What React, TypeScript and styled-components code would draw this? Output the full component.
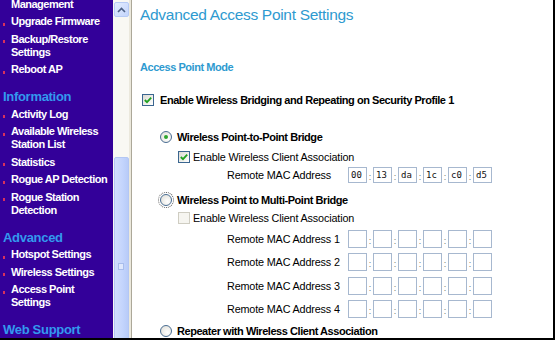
import styled, { createGlobalStyle, css } from "styled-components";

const GlobalStyle = createGlobalStyle`
  html, body {
    margin: 0;
    padding: 0;
    background: #fff;
  }
  body {
    font-family: "Liberation Sans", Arial, sans-serif;
  }
`;

const Page = styled.div`
  display: flex;
  width: 555px;
  height: 340px;
  box-sizing: border-box;
  border-right: 2px solid #000;
  border-bottom: 2px solid #000;
  overflow: hidden;
  font-family: "Liberation Sans", Arial, sans-serif;
`;

/* left menu frame */
const Sidebar = styled.nav`
  width: 113px;
  flex: none;
  background: #330099;
  overflow: hidden;
`;

// scrolled down a bit, like the real frame
const MenuList = styled.div`
  display: flex;
  flex-direction: column;
  margin-top: -20px;
`;

const MenuHeader = styled.div`
  padding: 14px 0 0 3px;
  font-size: 13px;
  line-height: 13px;
  font-weight: bold;
  letter-spacing: -0.3px;
  color: #3399ee;
`;

const MenuItem = styled.a`
  position: relative;
  display: block;
  padding: 4.5px 0 0 11px;
  font-size: 11px;
  line-height: 13px;
  font-weight: bold;
  letter-spacing: -0.5px;
  color: #fff;
  text-decoration: none;

  &::before {
    content: "";
    position: absolute;
    left: 3px;
    top: 12px;
    width: 2px;
    height: 3px;
    background: #d8315c;
  }
`;

const ScrollBar = styled.div`
  width: 18px;
  flex: none;
  box-sizing: border-box;
  border-right: 2px solid #ebe8dc;
  background: #f9f8f3;
  display: flex;
  flex-direction: column;
  align-items: center;
  padding-top: 2px;
  overflow: hidden;
`;

const ScrollButton = styled.div`
  width: 15px;
  height: 15px;
  flex: none;
  box-sizing: border-box;
  border: 1px solid #b7cbf5;
  border-radius: 2px;
  background: linear-gradient(135deg, #e3ecfe, #c4d5fc);
  display: flex;
  align-items: center;
  justify-content: center;
`;

const ScrollThumb = styled.div`
  width: 15px;
  height: 220px;
  flex: none;
  margin-top: 140px;
  box-sizing: border-box;
  border: 1px solid #b3c7f4;
  border-radius: 2px;
  background: linear-gradient(90deg, #d2defd, #c3d4fc 60%, #b8cbf8);
  display: flex;
  justify-content: center;
`;

const ScrollGrip = styled.div`
  width: 6px;
  height: 7px;
  margin-top: 105px;
  box-sizing: border-box;
  border: 1px solid #a8bdec;
  background: #dfe8fd;
`;

/* main frame */
const Content = styled.main`
  flex: 1;
  min-width: 0;
  border-left: 1px solid #aca899;
  padding: 6px 0 0 8px;
  display: flex;
  flex-direction: column;
  overflow: hidden;
  color: #000;
`;

const Title = styled.h1`
  margin: 0;
  font-size: 15.5px;
  line-height: 18px;
  font-weight: normal;
  letter-spacing: -0.3px;
  color: #2e9ad0;
  white-space: nowrap;
`;

const Rule = styled.hr`
  margin: 27px 0 0;
  border: 0;
  height: 2px;
  background: #3da3cf;
`;

const SectionTitle = styled.h2`
  margin: 9px 0 0;
  font-size: 11px;
  line-height: 14px;
  font-weight: bold;
  letter-spacing: -0.45px;
  color: #2e9ad0;
`;

const OptionRow = styled.div<{ $top: number; $indent: number; $gap: number }>`
  display: flex;
  align-items: center;
  height: 14px;
  flex: none;
  margin: ${(p) => p.$top}px 0 0 ${(p) => p.$indent}px;
  gap: ${(p) => p.$gap}px;
  white-space: nowrap;
`;

const StrongLabel = styled.span`
  font-size: 11px;
  font-weight: bold;
  letter-spacing: -0.45px;
`;

const Label = styled.span`
  font-size: 10.8px;
  letter-spacing: -0.15px;
`;

const Check = styled.span<{ $disabled?: boolean }>`
  width: 12px;
  height: 12px;
  flex: none;
  box-sizing: border-box;
  border: 1px solid ${(p) => (p.$disabled ? "#cfcdc2" : "#3b6690")};
  background: ${(p) =>
    p.$disabled ? "#f6f5f0" : "linear-gradient(135deg, #dcdbd3, #fff)"};
  display: flex;
  align-items: center;
  justify-content: center;
`;

const Radio = styled.span<{ $focused?: boolean }>`
  width: 12px;
  height: 12px;
  flex: none;
  box-sizing: border-box;
  border-radius: 50%;
  border: 1px solid #4a6d92;
  background: radial-gradient(circle at 65% 65%, #fff, #dedcd4);
  display: flex;
  align-items: center;
  justify-content: center;
  ${(p) =>
    p.$focused &&
    css`
      outline: 1px dotted #555;
      outline-offset: 1px;
    `}
`;

const RadioDot = styled.span`
  width: 4px;
  height: 4px;
  border-radius: 50%;
  background: #2ea52e;
`;

const MacRow = styled.div<{ $top: number; $h: number }>`
  display: flex;
  align-items: center;
  flex: none;
  height: ${(p) => p.$h}px;
  margin: ${(p) => p.$top}px 0 0 87px;
`;

const MacLabel = styled.span`
  width: 121px;
  flex: none;
  font-size: 10.8px;
  letter-spacing: -0.15px;
  white-space: nowrap;
`;

const MacFields = styled.div`
  display: flex;
  align-items: center;
  height: 100%;
`;

const MacBox = styled.span`
  width: 19px;
  height: 100%;
  box-sizing: border-box;
  border: 1px solid #a7b8cf;
  padding-left: 2px;
  display: flex;
  align-items: center;
  font-family: "DejaVu Sans Mono", monospace;
  font-size: 9px;
  color: #111;
`;

const Colon = styled.span`
  width: 6px;
  text-align: center;
  padding-top: 3px;
  font-size: 9px;
  color: #777;
`;

const CheckMark = () => (
  <svg width="10" height="10" viewBox="0 0 10 10">
    <path d="M1.8 5 L4 7.2 L8.2 2.6" fill="none" stroke="#21a121" strokeWidth="1.8" />
  </svg>
);

const UpArrow = () => (
  <svg width="9" height="6" viewBox="0 0 9 6">
    <path d="M1 5 L4.5 1.5 L8 5" fill="none" stroke="#4d6185" strokeWidth="1.6" />
  </svg>
);

const MacInputs = ({ values }: { values?: string[] }) => {
  const v = values || ["", "", "", "", "", ""];
  return (
    <MacFields>
      {v.map((x, i) => (
        <span key={i} style={{ display: "contents" }}>
          {i > 0 && <Colon>:</Colon>}
          <MacBox>{x}</MacBox>
        </span>
      ))}
    </MacFields>
  );
};

export default function App() {
  return (
    <>
      <GlobalStyle />
      <Page>
        <Sidebar>
          <MenuList>
            <MenuItem>
              Remote
              <br />
              Management
            </MenuItem>
            <MenuItem>Upgrade Firmware</MenuItem>
            <MenuItem>
              Backup/Restore
              <br />
              Settings
            </MenuItem>
            <MenuItem>Reboot AP</MenuItem>
            <MenuHeader>Information</MenuHeader>
            <MenuItem>Activity Log</MenuItem>
            <MenuItem>
              Available Wireless
              <br />
              Station List
            </MenuItem>
            <MenuItem>Statistics</MenuItem>
            <MenuItem>Rogue AP Detection</MenuItem>
            <MenuItem>
              Rogue Station
              <br />
              Detection
            </MenuItem>
            <MenuHeader>Advanced</MenuHeader>
            <MenuItem>Hotspot Settings</MenuItem>
            <MenuItem>Wireless Settings</MenuItem>
            <MenuItem>
              Access Point
              <br />
              Settings
            </MenuItem>
            <MenuHeader>Web Support</MenuHeader>
          </MenuList>
        </Sidebar>

        <ScrollBar>
          <ScrollButton>
            <UpArrow />
          </ScrollButton>
          <ScrollThumb>
            <ScrollGrip />
          </ScrollThumb>
        </ScrollBar>

        <Content>
          <Title>Advanced Access Point Settings</Title>
          <Rule />
          <SectionTitle>Access Point Mode</SectionTitle>

          <OptionRow $top={19} $indent={2} $gap={6}>
            <Check>
              <CheckMark />
            </Check>
            <StrongLabel>Enable Wireless Bridging and Repeating on Security Profile 1</StrongLabel>
          </OptionRow>

          <OptionRow $top={23} $indent={20} $gap={5}>
            <Radio>
              <RadioDot />
            </Radio>
            <StrongLabel>Wireless Point-to-Point Bridge</StrongLabel>
          </OptionRow>
          <OptionRow $top={6} $indent={38} $gap={3}>
            <Check>
              <CheckMark />
            </Check>
            <Label>Enable Wireless Client Association</Label>
          </OptionRow>
          <MacRow $top={3} $h={16}>
            <MacLabel>Remote MAC Address</MacLabel>
            <MacInputs values={["00", "13", "da", "1c", "c0", "d5"]} />
          </MacRow>

          <OptionRow $top={10} $indent={20} $gap={5}>
            <Radio $focused />
            <StrongLabel>Wireless Point to Multi-Point Bridge</StrongLabel>
          </OptionRow>
          <OptionRow $top={4} $indent={38} $gap={3}>
            <Check $disabled />
            <Label>Enable Wireless Client Association</Label>
          </OptionRow>
          <MacRow $top={5} $h={18}>
            <MacLabel>Remote MAC Address 1</MacLabel>
            <MacInputs />
          </MacRow>
          <MacRow $top={5} $h={18}>
            <MacLabel>Remote MAC Address 2</MacLabel>
            <MacInputs />
          </MacRow>
          <MacRow $top={6} $h={18}>
            <MacLabel>Remote MAC Address 3</MacLabel>
            <MacInputs />
          </MacRow>
          <MacRow $top={5} $h={18}>
            <MacLabel>Remote MAC Address 4</MacLabel>
            <MacInputs />
          </MacRow>

          <OptionRow $top={6} $indent={20} $gap={5}>
            <Radio />
            <StrongLabel>Repeater with Wireless Client Association</StrongLabel>
          </OptionRow>
        </Content>
      </Page>
    </>
  );
}
